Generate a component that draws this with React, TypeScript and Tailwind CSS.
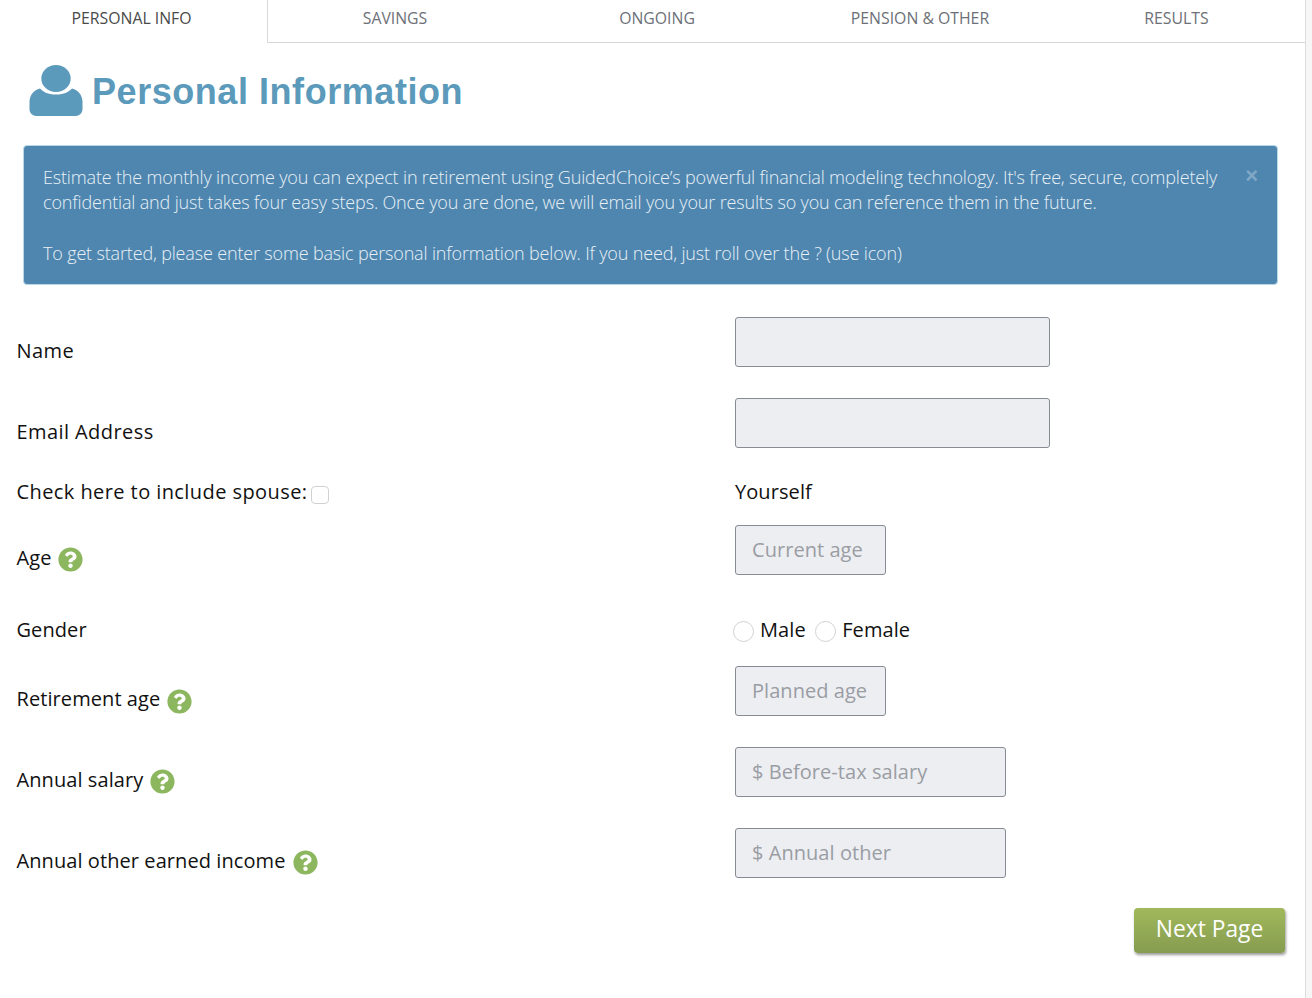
import React from "react";
import { FaQuestionCircle } from "react-icons/fa";

function Help() {
  return <FaQuestionCircle className="w-[25px] h-[25px] shrink-0 text-[#8db75f]" />;
}

function Field({ w, placeholder }: { w: string; placeholder?: string }) {
  return (
    <input
      readOnly
      placeholder={placeholder}
      className={`${w} h-[50px] bg-[#edeef2] border border-[#868b94] rounded-[3px] pl-4 pr-2 pb-[2px] text-[20px] tracking-[0.05px] placeholder:text-[#9a9da3] outline-none`}
    />
  );
}

const tabs = [
  { t: "SAVINGS", w: "w-[254px]" },
  { t: "ONGOING", w: "w-[270px]" },
  { t: "PENSION & OTHER", w: "w-[256px]" },
  { t: "RESULTS", w: "w-[257px]" },
];

export default function App() {
  return (
    <div className="w-[1312px] h-[998px] overflow-hidden bg-[#f6f6f6] font-['Open_Sans',sans-serif]">
      <div className="w-[1305px] h-full bg-white border-r border-[#dcdcdc] box-content">
        <div className="flex h-[43px] text-[15.8px] text-[#6d7077]">
          <div className="w-[268px] pr-[4px] pb-[5px] flex items-center justify-center text-[#4a4a4a] border-r border-[#d8d8d8]">PERSONAL INFO</div>
          {tabs.map((x) => (
            <div key={x.t} className={`${x.w} pb-[4px] flex items-center justify-center border-b border-[#d8d8d8]`}>{x.t}</div>
          ))}
        </div>

        <div className="flex items-center h-[102px] pl-[29px] gap-[9px]">
          <svg viewBox="0 0 54 52" className="w-[54px] h-[52px] mt-[-7px]">
            <ellipse cx="27" cy="13.5" rx="14.7" ry="13.5" fill="#5b9aba" />
            <path d="M11 23.500C15 28 21 29.500 27 29.500S39 28 43 23.500C49 25 53.500 30 53.500 37v7c0 4-3 7-7 7H7.500c-4 0-7-3-7-7v-7C.5 30 5 25 11 23.500z" fill="#5b9aba" />
          </svg>
          <h1 className="font-['Liberation_Sans',sans-serif] font-bold text-[36px] text-[#5b9aba] leading-none tracking-[0.55px] mt-[-4px]">Personal Information</h1>
        </div>

        <div className="relative ml-[23px] w-[1255px] h-[140px] bg-[#4e86b0] border border-[#b9d8e6] rounded-[4px] pl-[19px] pr-[55px] pt-[19px] text-[18px] font-light leading-[25.3px] tracking-[-0.16px] text-[#e9f0f5]">
          <p>Estimate the monthly income you can expect in retirement using GuidedChoice’s powerful financial modeling technology. It's free, secure, completely confidential and just takes four easy steps. Once you are done, we will email you your results so you can reference them in the future.</p>
          <p className="mt-[25.3px]">To get started, please enter some basic personal information below. If you need, just roll over the ? (use icon)</p>
          <span className="absolute right-[19px] top-[19px] font-['Liberation_Sans',sans-serif] font-bold text-[22px] leading-none text-[#81a8c6]">×</span>
        </div>

        <div className="pl-[16.5px] pt-[32px] text-[20px] text-[#111111] leading-[28px] tracking-[0.08px]">
          <div className="flex h-[81px]">
            <div className="w-[718.5px] pt-[20px] font-medium tracking-[0.42px]">Name</div>
            <Field w="w-[315px]" />
          </div>
          <div className="flex h-[81px]">
            <div className="w-[718.5px] pt-[20px] font-medium tracking-[0.42px]">Email Address</div>
            <Field w="w-[315px]" />
          </div>
          <div className="flex items-center h-[46px] mt-[-8px]">
            <div className="w-[718.5px] flex items-center font-medium tracking-[0.42px] mt-[-4px]">
              Check here to include spouse:
              <span className="ml-[4px] mt-[5px] w-[18px] h-[18px] border border-[#d2d2d2] rounded-[4px]" />
            </div>
            <div className="mt-[-4px]">Yourself</div>
          </div>
          <div className="flex h-[74px] mt-[8px]">
            <div className="w-[718.5px] pt-[19px] flex items-start gap-[7px]">Age <span className="mt-[3px]"><Help /></span></div>
            <Field w="w-[151px]" placeholder="Current age" />
          </div>
          <div className="flex items-center h-[67px]">
            <div className="w-[716.5px] mt-[-6px]">Gender</div>
            <div className="flex items-center mt-[-6px]">
              <span className="w-[21px] h-[21px] mt-[4px] border border-[#d2d2d2] rounded-full" />
              <span className="ml-[6px]">Male</span>
              <span className="ml-[9.500px] w-[21px] h-[21px] mt-[4px] border border-[#d2d2d2] rounded-full" />
              <span className="ml-[6px]">Female</span>
            </div>
          </div>
          <div className="flex h-[81px]">
            <div className="w-[718.5px] pt-[19px] flex items-start gap-[7px]">Retirement age <span className="mt-[3.500px]"><Help /></span></div>
            <Field w="w-[151px]" placeholder="Planned age" />
          </div>
          <div className="flex h-[81px]">
            <div className="w-[718.5px] pt-[19px] flex items-start gap-[7px]">Annual salary <span className="mt-[3px]"><Help /></span></div>
            <Field w="w-[271px]" placeholder="$ Before-tax salary" />
          </div>
          <div className="flex h-[80px]">
            <div className="w-[718.5px] pt-[19px] flex items-start gap-[7px]">Annual other earned income <span className="mt-[3px]"><Help /></span></div>
            <Field w="w-[271px]" placeholder="$ Annual other" />
          </div>
        </div>

        <div className="flex justify-end pr-[20px]">
          <button className="w-[151px] h-[45px] pb-[2px] rounded-[4px] bg-gradient-to-b from-[#a1b95b] to-[#869c50] text-white text-[22.800px] shadow-[1px_2px_3px_rgba(0,0,0,0.4)]">Next Page</button>
        </div>
      </div>
    </div>
  );
}
